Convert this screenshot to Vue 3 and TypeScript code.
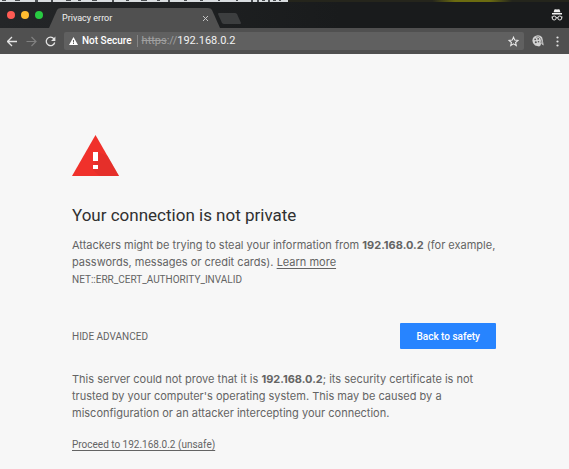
<script setup lang="ts">
import { ref } from 'vue'

const host = '192.168.0.2'
const errorCode = 'NET::ERR_CERT_AUTHORITY_INVALID'
const advanced = ref(true)
const windowButtons = [
  { name: 'Close window', tone: 'red' },
  { name: 'Minimise window', tone: 'amber' },
  { name: 'Zoom window', tone: 'green' },
]
</script>

<template>
  <div class="browser">
    <div class="desktop" aria-hidden="true">
      <svg class="scraps" width="288" height="2" viewBox="0 0 288 2">
        <path fill="#d9dde0" d="M0 0h288v2H0z" />
        <path
          fill="#4a4e51"
          d="M2 0h4v1H2zM15 0h5v1h-5zM35 0h3v2h-3zM51 0h2v2h-2zM66 0h5v1h-5zM78 0h3v1h-3zM92 0h5v1h-5zM112 0h2v2h-2zM126 0h3v1h-3zM141 0h6v1h-6zM157 0h3v1h-3zM168 0h2v2h-2zM184 0h3v1h-3zM200 0h3v1h-3zM218 0h2v1h-2zM236 0h2v1h-2zM251 0h2v2h-2zM257 0h2v2h-2zM262 0h3v1h-3zM268 0h2v2h-2zM273 0h3v1h-3zM279 0h2v1h-2z"
        />
      </svg>
    </div>

    <header class="tab-strip">
      <div class="window-buttons">
        <button v-for="b in windowButtons" :key="b.tone" :class="['light', b.tone]" :aria-label="b.name"></button>
      </div>
      <div class="tab">
        <svg class="tab-shape" viewBox="0 0 172 20" preserveAspectRatio="none" aria-hidden="true">
          <path fill="#505050" d="M0 20 L8 2 Q9 0 12 0 H159 Q162 0 163 2 L171 20Z" />
        </svg>
        <span class="tab-title">Privacy error</span>
        <button class="tab-close" aria-label="Close tab">
          <svg width="7" height="7" viewBox="0 0 7 7"><path d="M1 1l5 5M6 1l-5 5" stroke="#c4c4c4" stroke-width="1" /></svg>
        </button>
      </div>
      <button class="new-tab" aria-label="New tab">
        <svg width="23" height="11" viewBox="0 0 23 11">
          <path fill="#3c3e3f" d="M1 0h16q1 0 2 1l4 9q0 1-1 1H6q-1 0-2-1L0 1q0-1 1-1z" />
        </svg>
      </button>
      <svg class="incognito" width="12" height="12" viewBox="0 0 12 12" aria-label="Incognito">
        <path fill="#f1f1f1" d="M3.4 0.6 Q4.3 0 6 0.6 Q7.7 0 8.6 0.6 L9.4 3.2H2.6zM1 4h10v1.4H1z" />
        <g fill="none" stroke="#e6e6e6" stroke-width="1">
          <circle cx="3.2" cy="9" r="2" /><circle cx="8.8" cy="9" r="2" />
          <path d="M5.2 8.7q.8-.6 1.6 0M.5 8h1M10.5 8h1" />
        </g>
      </svg>
    </header>

    <nav class="toolbar">
      <button aria-label="Back">
        <svg width="11" height="11" viewBox="0 0 11 11"><path d="M10 5.5H.8M5 1L.5 5.500 5 10" stroke="#e4e4e4" stroke-width="1.3" fill="none" /></svg>
      </button>
      <button aria-label="Forward">
        <svg width="11" height="11" viewBox="0 0 11 11"><path d="M.5 5.5H10M5.5 1L10 5.5 5.5 10" stroke="#808080" stroke-width="1.2" fill="none" /></svg>
      </button>
      <button aria-label="Reload">
        <svg width="11" height="11" viewBox="0 0 11 11">
          <path d="M9 2.8A4.3 4.3 0 1 0 9.7 6.5" stroke="#e4e4e4" stroke-width="1.3" fill="none" />
          <path fill="#e4e4e4" d="M10.4.6v4.3H6.1z" />
        </svg>
      </button>
      <div class="address">
        <svg width="9" height="8" viewBox="0 0 9 8" aria-hidden="true">
          <path fill="#fff" d="M4.5 0L9 8H0z" /><path fill="#606060" d="M4 3h1v2.4H4zM4 6h1v1H4z" />
        </svg>
        <span class="security">Not Secure</span>
        <span class="url"><s>https</s><span class="slashes">://</span>{{ host }}</span>
        <button class="star" aria-label="Bookmark this page">
          <svg width="11" height="11" viewBox="0 0 11 11">
            <path d="M5.5 1.2l1.3 2.9 3.2.3-2.4 2.1.7 3.1-2.8-1.7-2.8 1.7.7-3.1L1 4.4l3.2-.3z" fill="none" stroke="#e8e8e8" stroke-width="1.1" />
          </svg>
        </button>
      </div>
      <button class="extension" aria-label="Extension">
        <svg width="12" height="12" viewBox="0 0 12 12">
          <path fill="#d2d2d2" d="M2 1.8Q5-.8 8.3.7q2.4 1 2.5 4.3l.9 5.5-1.6-.9-.9-1.4-.7 2.200-1.400 1-4-.8Q.3 8.5.4 5.5.5 3 2 1.8z" />
          <g fill="#555"><circle cx="3.2" cy="4.3" r=".9" /><circle cx="6.2" cy="3.800" r=".9" /><circle cx="3.800" cy="7.3" r="1" /><circle cx="6.500" cy="6.700" r=".8" /></g>
          <path d="M4 2.200q3-1.500 4.500 1t.3 5M9.800 5.500l.3 3" fill="none" stroke="#686868" stroke-width=".7" />
        </svg>
      </button>
      <button class="menu" aria-label="Menu">
        <svg width="3" height="11" viewBox="0 0 3 11"><g fill="#e4e4e4"><circle cx="1.5" cy="1.5" r="1.1" /><circle cx="1.5" cy="5.5" r="1.1" /><circle cx="1.5" cy="9.5" r="1.1" /></g></svg>
      </button>
    </nav>

    <main class="page">
      <svg class="warning" width="47" height="41" viewBox="0 0 47 41" role="img" aria-label="Warning">
        <path fill="#f0312b" d="M23.5 0L47 41H0z" />
        <path fill="#d92d29" d="M26 17L35.5 21 47 41H27.5L21 35z" opacity=".5" />
        <path fill="#fff" d="M21 17h5v9h-5zM21 30h5v4h-5z" />
      </svg>
      <h1>Your connection is not private</h1>
      <p class="copy">
        Attackers might be trying to steal your information from <strong>{{ host }}</strong> (for example,
        passwords, messages or credit cards). <a href="#learn">Learn more</a>
      </p>
      <p class="code">{{ errorCode }}</p>
      <div class="actions">
        <button class="toggle" :aria-expanded="advanced" @click="advanced = !advanced">
          {{ advanced ? 'HIDE ADVANCED' : 'ADVANCED' }}
        </button>
        <button class="safety">Back to safety</button>
      </div>
      <section v-if="advanced">
        <p class="copy">
          This server could not prove that it is <strong>{{ host }}</strong>; its security certificate is not
          trusted by your computer's operating system. This may be caused by a
          misconfiguration or an attacker intercepting your connection.
        </p>
        <a class="proceed" href="#proceed">Proceed to {{ host }} (unsafe)</a>
      </section>
    </main>
  </div>
</template>

<style>
body {
  background: #f7f7f7;
}
</style>

<style scoped>
.browser {
  font-family: Roboto, Inter, sans-serif;
  color: #646464;
}
button {
  display: block;
  padding: 0;
  border: 0;
  background: none;
  font: inherit;
  color: inherit;
  cursor: pointer;
}
svg {
  display: block;
  flex: none;
}
.desktop {
  height: 2px;
  background: linear-gradient(90deg, #25251c 76%, #6c6c10 80%, #6c6c10 86%, #24251c 90%);
}
.tab-strip {
  display: flex;
  align-items: flex-end;
  height: 26px;
  background: linear-gradient(90deg, #242628, #191b1c 60%);
}
.window-buttons {
  display: flex;
  gap: 6px;
  padding: 0 6px 9px 7px;
}
.light {
  width: 8px;
  height: 8px;
  border-radius: 50%;
}
.red {
  background: #ff5b54;
}
.amber {
  background: #ffbc30;
}
.green {
  background: #28cb42;
}
.tab {
  display: grid;
  grid-template-columns: 1fr auto;
  align-items: center;
  width: 172px;
  height: 20px;
}
.tab > * {
  grid-row: 1;
}
.tab-shape {
  grid-column: 1 / -1;
  width: 100%;
  height: 20px;
}
.tab-title {
  grid-column: 1;
  padding-left: 13px;
  font-size: 9px;
  line-height: 20px;
  color: #f2f2f2;
}
.tab-close {
  grid-column: 2;
  padding-right: 12px;
}
.new-tab {
  padding: 0 0 4px;
  margin-left: -3px;
}
.incognito {
  margin: 0 6px 7px auto;
}
.toolbar {
  display: flex;
  align-items: center;
  gap: 8px;
  height: 26px;
  padding: 0 10px 0 7px;
  background: #505050;
}
.address {
  display: flex;
  flex: 1;
  align-items: center;
  height: 18px;
  padding: 0 5px;
  border-radius: 2px;
  background: #606060;
  color: #f2f2f2;
  font-size: 11px;
  line-height: 18px;
}
.security {
  margin-left: 4px;
  font-size: 10px;
  font-weight: 500;
  color: #fff;
}
.url {
  margin-left: 5px;
  padding-left: 4px;
  border-left: 1px solid #858585;
  line-height: 12px;
}
.url s,
.slashes {
  color: #a0a0a0;
}
.star {
  margin-left: auto;
}
.menu {
  margin-left: 4px;
}
.page {
  padding: 81px 73px 16px 72px;
}
h1 {
  margin: 27px 0 10px;
  font-size: 17px;
  font-weight: 400;
  line-height: 24px;
  color: #303030;
}
p {
  margin: 0;
}
.copy {
  font-family: Inter, Roboto, sans-serif;
  font-size: 11px;
  line-height: 17px;
}
strong {
  font-weight: 700;
}
a {
  color: inherit;
  text-underline-offset: 2px;
}
.code {
  font-size: 10px;
  line-height: 17px;
}
.actions {
  display: flex;
  align-items: center;
  justify-content: space-between;
  margin: 35px 0 22px;
}
.toggle {
  font-size: 10px;
}
.safety {
  height: 26px;
  padding: 0 16px;
  border-radius: 1px;
  background: #2784ff;
  color: #fff;
  font-size: 10px;
  font-weight: 500;
}
.proceed {
  display: inline-block;
  margin-top: 16px;
  font-size: 10px;
  line-height: 14px;
}
</style>
